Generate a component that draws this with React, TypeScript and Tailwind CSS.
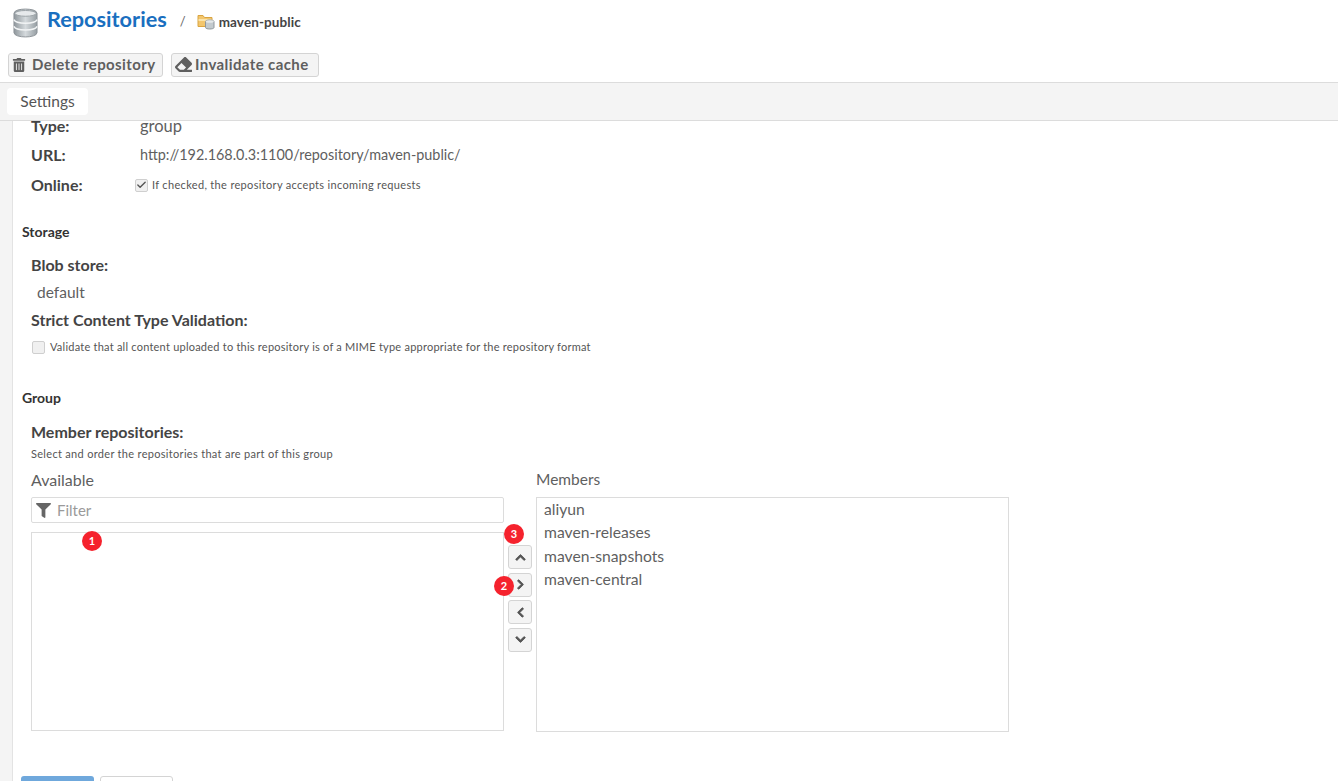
import { FaChevronDown, FaChevronLeft, FaChevronRight, FaChevronUp, FaEraser, FaFilter, FaTrashAlt } from "react-icons/fa";
import { Check } from "lucide-react";

function DatabaseIcon() {
  return (
    <svg width="25" height="30" viewBox="0 0 26 30">
      <defs>
        <linearGradient id="dbg" x1="0" x2="1" y1="0" y2="0">
          <stop offset="0" stopColor="#8f979c" />
          <stop offset="0.5" stopColor="#d5dadd" />
          <stop offset="1" stopColor="#969ea3" />
        </linearGradient>
      </defs>
      <path d="M1 5c0-6 24-6 24 0v20c0 6-24 6-24 0z" fill="url(#dbg)" stroke="#8b9297" />
      <ellipse cx="13" cy="5" rx="11" ry="3" fill="#e6e9eb" stroke="#9aa1a6" />
      <path d="M1 11.500c2 5 22 5 24 0M1 18.500c2 5 22 5 24 0" fill="none" stroke="#f2f4f5" strokeWidth="1.500" />
    </svg>
  );
}

function FolderDbIcon() {
  return (
    <svg width="18" height="17" viewBox="0 0 18 17">
      <path d="M1 2.500h5l1.500 2H15v9H1z" fill="#f3c66d" stroke="#d9a441" />
      <path d="M1.500 6h13v2h-13z" fill="#fbe3a8" />
      <path d="M8.500 8.500c0-2 8.500-2 8.500 0v6c0 2-8.500 2-8.500 0z" fill="#c3cace" stroke="#8f979c" />
      <ellipse cx="12.750" cy="8.500" rx="4" ry="1.300" fill="#e4e8ea" />
    </svg>
  );
}

function ToolButton({ icon, label, className }: { icon: React.ReactNode; label: string; className: string }) {
  return (
    <button className={`flex h-[24px] items-center rounded-[3px] border border-[#d4d4d4] bg-[#f4f4f4] pb-[1px] pl-[3px] text-[15px] font-bold tracking-[0.4px] text-[#5f5f5f] ${className}`}>
      {icon}
      {label}
    </button>
  );
}

function MoveButton({ children }: { children: React.ReactNode }) {
  return (
    <button className="flex h-[24px] w-[24px] items-center justify-center rounded-[3px] border border-[#d4d4d4] bg-[#f4f4f4] text-[11px] text-[#555] [&_path]:stroke-[#555] [&_path]:stroke-[40]">
      {children}
    </button>
  );
}

function Badge({ n, className }: { n: number; className: string }) {
  return (
    <span className={`absolute flex h-[20px] w-[20px] items-center justify-center rounded-full bg-[#f5222d] text-[11px] font-bold text-white ${className}`}>
      {n}
    </span>
  );
}

export default function App() {
  const members = ["aliyun", "maven-releases", "maven-snapshots", "maven-central"];

  return (
    <div className="flex h-screen flex-col overflow-hidden bg-white font-['Lato','Liberation_Sans',sans-serif] text-[#444]">
      <header className="h-[83px] shrink-0 border-b border-[#dcdcdc] bg-white pl-[8px]">
        <div className="flex h-[43px] items-center">
          <span className="ml-[5px] mr-[9px] mt-[3px]">
            <DatabaseIcon />
          </span>
          <h1 className="mb-[4px] text-[21.700px] leading-none font-bold text-[#1a6fbf]">Repositories</h1>
          <span className="ml-[13px] text-[13px] text-[#666]">/</span>
          <span className="ml-[11px]">
            <FolderDbIcon />
          </span>
          <span className="ml-[4px] mt-[2px] text-[13.500px] font-bold tracking-[0.1px] text-[#444]">maven-public</span>
        </div>
        <div className="mt-[10px] flex gap-[8px]">
          <ToolButton className="w-[155px] gap-[6px]" icon={<FaTrashAlt className="text-[14px]" />} label="Delete repository" />
          <ToolButton className="w-[148px] gap-[3px]" icon={<FaEraser className="text-[17px]" />} label="Invalidate cache" />
        </div>
      </header>

      <div className="h-[38px] shrink-0 border-b border-[#dcdcdc] bg-[#f4f4f4] pl-[7px] pt-[5px]">
        <div className="flex h-[27px] w-[81px] items-center justify-center rounded-[4px] bg-white text-[15.500px] text-[#555]">Settings</div>
      </div>

      <div className="flex min-h-0 flex-1">
        <div className="w-[13px] shrink-0 border-r border-[#e3e3e3] bg-[#f4f4f4]" />
        <main className="relative min-w-0 flex-1 overflow-hidden pl-[9px]">
          <div className="pl-[9px]">
            <div className="-mt-[1px] flex h-[12px] items-center text-[16px]">
              <span className="w-[109px] font-bold">Type:</span>
              <span className="text-[16.500px] text-[#5f5f5f]">group</span>
            </div>
            <div className="mt-[17px] flex h-[12px] items-center text-[16px]">
              <span className="w-[109px] font-bold">URL:</span>
              <span className="text-[14.400px] text-[#5f5f5f]">http://192.168.0.3:1100/repository/maven-public/</span>
            </div>
            <div className="mt-[17px] flex h-[14px] items-center text-[16px]">
              <span className="w-[104px] font-bold">Online:</span>
              <span className="mr-[4px] flex h-[13px] w-[13px] items-center justify-center rounded-[2px] border border-[#cfcfcf] bg-[#f0f0f0]">
                <Check size={14} strokeWidth={3} className="text-[#555]" />
              </span>
              <span className="text-[11px] tracking-[0.33px] text-[#555]">If checked, the repository accepts incoming requests</span>
            </div>
          </div>

          <h2 className="mt-[33px] text-[14px] leading-[14px] font-bold text-[#333]">Storage</h2>
          <div className="pl-[9px]">
            <div className="mt-[18px] text-[16px] leading-[16px] font-bold">Blob store:</div>
            <div className="ml-[6px] mt-[10px] text-[15.500px] leading-[18px] text-[#5f5f5f]">default</div>
            <div className="mt-[11px] text-[16px] leading-[16px] font-bold">Strict Content Type Validation:</div>
            <div className="mt-[12px] flex h-[14px] items-center">
              <span className="ml-[1px] mr-[5px] h-[13px] w-[13px] rounded-[2px] border border-[#cfcfcf] bg-[#f0f0f0]" />
              <span className="text-[11px] tracking-[0.23px] text-[#555]">Validate that all content uploaded to this repository is of a MIME type appropriate for the repository format</span>
            </div>
          </div>

          <h2 className="mt-[37px] text-[14px] leading-[14px] font-bold text-[#333]">Group</h2>
          <div className="pl-[9px]">
            <div className="mt-[19px] text-[16px] leading-[16px] font-bold">Member repositories:</div>
            <div className="mt-[7px] text-[11px] leading-[14px] tracking-[0.31px] text-[#555]">Select and order the repositories that are part of this group</div>
            <div className="mt-[10px] flex">
              <div className="w-[473px]">
                <div className="text-[16px] leading-[18px] text-[#5f5f5f]">Available</div>
                <div className="mt-[8px] flex h-[26px] items-center gap-[6px] rounded-[2px] border border-[#dcdcdc] pl-[4px] text-[15px] text-[#9a9a9a]">
                  <FaFilter className="text-[15px] text-[#666]" />
                  Filter
                </div>
                <div className="mt-[9px] h-[199px] border border-[#dcdcdc]" />
              </div>
              <div className="flex w-[32px] flex-col items-center gap-[3.500px] pt-[74px]">
                <MoveButton><FaChevronUp /></MoveButton>
                <MoveButton><FaChevronRight /></MoveButton>
                <MoveButton><FaChevronLeft /></MoveButton>
                <MoveButton><FaChevronDown /></MoveButton>
              </div>
              <div className="w-[473px]">
                <div className="-mt-[1px] text-[15.500px] leading-[18px] text-[#5f5f5f]">Members</div>
                <div className="mt-[9px] h-[235px] border border-[#dcdcdc] px-[7px]">
                  {members.map((m) => (
                    <div key={m} className="h-[23.400px] text-[15.700px] leading-[23px] text-[#5f5f5f]">{m}</div>
                  ))}
                </div>
              </div>
            </div>
          </div>

          <div className="-ml-[1px] mt-[44px] flex gap-[6px]">
            <button className="h-[30px] w-[73px] rounded-[3px] bg-[#6fa8dc]" />
            <button className="h-[30px] w-[73px] rounded-[3px] border border-[#d4d4d4] bg-white" />
          </div>

          <Badge n={1} className="left-[69px] top-[410px]" />
          <Badge n={3} className="left-[491px] top-[403px]" />
          <Badge n={2} className="left-[481px] top-[455px]" />
        </main>
      </div>
    </div>
  );
}
